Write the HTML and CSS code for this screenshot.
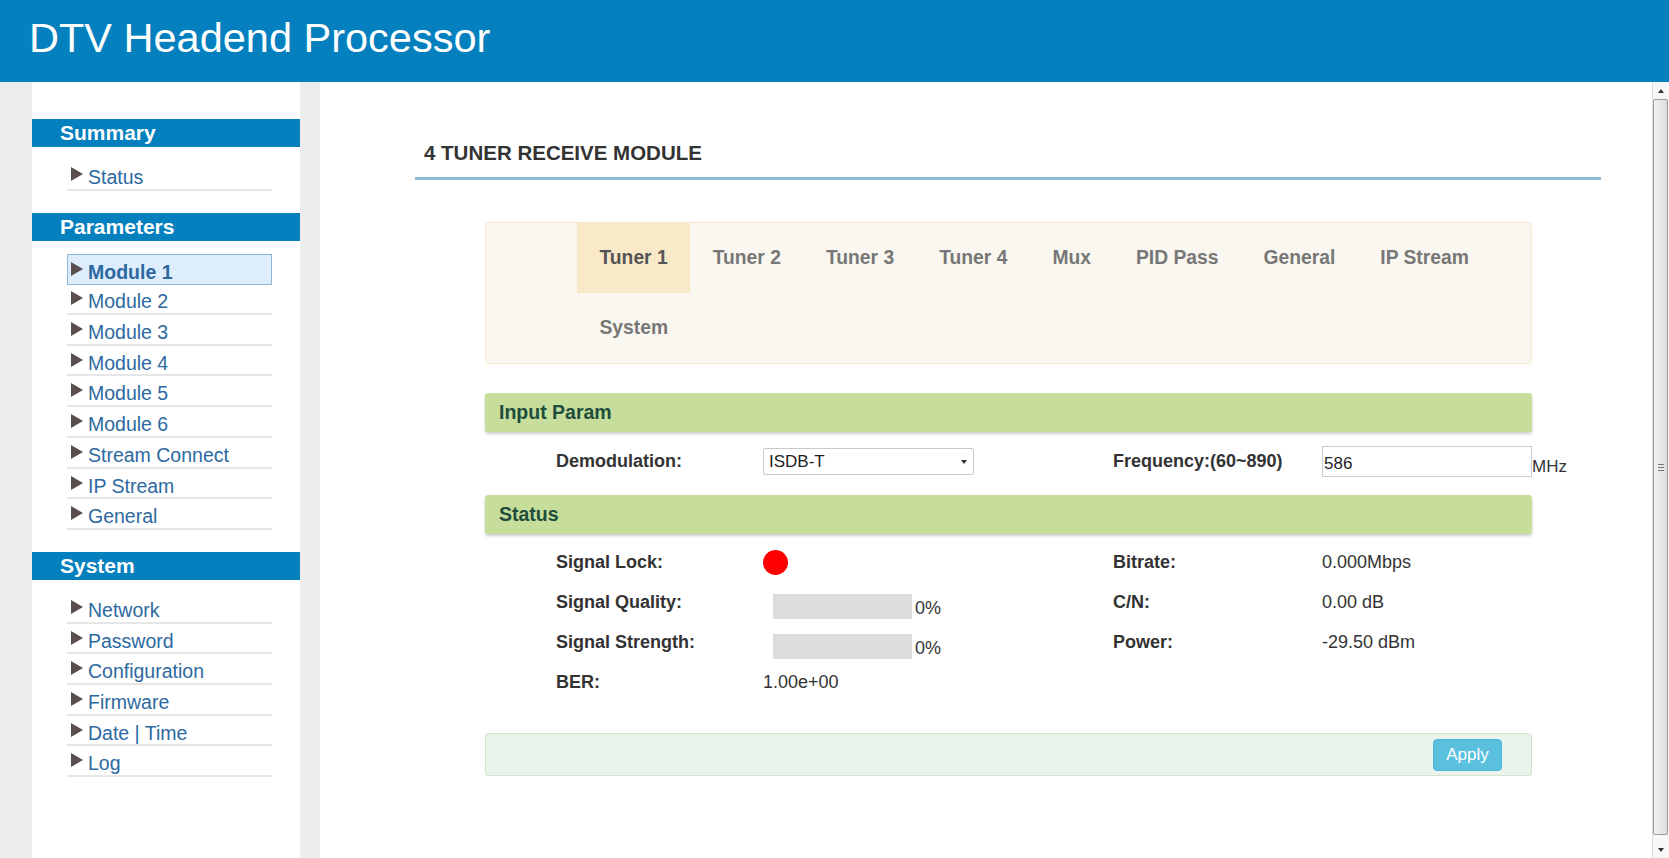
FILE: index.html
```html
<!DOCTYPE html>
<html lang="en">
<head>
    <meta charset="UTF-8">
    <title>DTV Headend Processor</title>
    <link rel="stylesheet" href="styles.css">
</head>
<body>
    <header class="topbar">
        <h1>DTV Headend Processor</h1>
    </header>

    <div class="frame">
        <div class="edge"></div>

        <nav class="sidebar">
            <h2 class="menu-title">Summary</h2>
            <ul class="menu">
                <li><a href="#"><i class="arrow"></i>Status</a></li>
            </ul>

            <h2 class="menu-title">Parameters</h2>
            <ul class="menu">
                <li class="active"><a href="#"><i class="arrow"></i>Module 1</a></li>
                <li><a href="#"><i class="arrow"></i>Module 2</a></li>
                <li><a href="#"><i class="arrow"></i>Module 3</a></li>
                <li><a href="#"><i class="arrow"></i>Module 4</a></li>
                <li><a href="#"><i class="arrow"></i>Module 5</a></li>
                <li><a href="#"><i class="arrow"></i>Module 6</a></li>
                <li><a href="#"><i class="arrow"></i>Stream Connect</a></li>
                <li><a href="#"><i class="arrow"></i>IP Stream</a></li>
                <li><a href="#"><i class="arrow"></i>General</a></li>
            </ul>

            <h2 class="menu-title">System</h2>
            <ul class="menu">
                <li><a href="#"><i class="arrow"></i>Network</a></li>
                <li><a href="#"><i class="arrow"></i>Password</a></li>
                <li><a href="#"><i class="arrow"></i>Configuration</a></li>
                <li><a href="#"><i class="arrow"></i>Firmware</a></li>
                <li><a href="#"><i class="arrow"></i>Date | Time</a></li>
                <li><a href="#"><i class="arrow"></i>Log</a></li>
            </ul>
        </nav>

        <div class="edge edge-thin"></div>

        <main class="content">
            <h3 class="page-title">4 TUNER RECEIVE MODULE</h3>

            <div class="panel">
                <ul class="tabs">
                    <li class="active">Tuner 1</li>
                    <li>Tuner 2</li>
                    <li>Tuner 3</li>
                    <li>Tuner 4</li>
                    <li>Mux</li>
                    <li>PID Pass</li>
                    <li>General</li>
                    <li>IP Stream</li>
                    <li>System</li>
                </ul>

                <div class="section-bar">Input Param</div>
                <div class="fields">
                    <label>Demodulation:</label>
                    <div class="select-wrap">
                        <select class="select">
                            <option>ISDB-T</option>
                        </select>
                    </div>
                    <label>Frequency:(60~890)</label>
                    <div class="input-cell"><input class="text-input" type="text" value="586">MHz</div>
                </div>

                <div class="section-bar">Status</div>
                <div class="fields status">
                    <label>Signal Lock:</label>
                    <div><span class="lock-dot"></span></div>
                    <label>Bitrate:</label>
                    <div>0.000Mbps</div>

                    <label>Signal Quality:</label>
                    <div class="meter-cell"><span class="meter"><span class="meter-fill" style="width: 0%"></span></span>0%</div>
                    <label>C/N:</label>
                    <div>0.00 dB</div>

                    <label>Signal Strength:</label>
                    <div class="meter-cell"><span class="meter"><span class="meter-fill" style="width: 0%"></span></span>0%</div>
                    <label>Power:</label>
                    <div>-29.50 dBm</div>

                    <label>BER:</label>
                    <div>1.00e+00</div>
                    <span></span>
                    <span></span>
                </div>

                <div class="actions">
                    <button class="btn-apply">Apply</button>
                </div>
            </div>
        </main>

        <div class="scrollbar">
            <div class="sb-btn"><i class="sb-up"></i></div>
            <div class="sb-thumb"><i class="sb-grip"></i></div>
            <div class="sb-btn"><i class="sb-down"></i></div>
        </div>
    </div>
</body>
</html>
```

FILE: styles.css
```css
body {
    margin: 0;
    font-family: "Liberation Sans", Arial, sans-serif;
    color: #333;
    overflow: hidden;
}

/* top banner */
.topbar {
    height: 82px;
    background-color: #0480be;
}
.topbar h1 {
    margin: 0;
    padding-left: 29px;
    font-size: 41.5px;
    font-weight: normal;
    line-height: 76px;
    color: #fff;
}

.frame {
    display: flex;
    height: calc(100vh - 82px);
}
.edge {
    flex: 0 0 32px;
    background-color: #ededed;
}
.edge-thin { flex-basis: 20px; }

/* left menu */
.sidebar {
    flex: 0 0 268px;
    padding-top: 37px;
    background-color: #fff;
}
.menu-title {
    margin: 0;
    height: 28px;
    padding-left: 28px;
    background-color: #0480be;
    color: #fff;
    font-size: 21px;
    line-height: 28px;
}
.menu {
    list-style: none;
    margin: 13px 28px 22px 35px;
    padding: 0;
}
.menu li {
    height: 28.7px;
    border-bottom: 2px solid #e6e6e6;
}
.menu a {
    display: block;
    padding: 7px 0 0 4px;
    font-size: 19.5px;
    line-height: 21px;
    color: #2d69a1;
    text-decoration: none;
}
.menu li.active {
    border: 1px solid #8db7d6;
    background-color: #deedfc;
    height: 29.7px;
    margin-bottom: -1px;
}
.menu li.active a {
    padding-left: 3px;
    font-weight: bold;
}
.arrow {
    display: inline-block;
    width: 0;
    height: 0;
    margin-right: 5px;
    border-left: 12px solid #5a4e4e;
    border-top: 7px solid transparent;
    border-bottom: 7px solid transparent;
    vertical-align: 3px;
}

/* page body */
.content {
    flex: 1;
    min-width: 0;
    padding: 0 51px 0 95px;
    background-color: #fff;
}
.page-title {
    margin: 59px 0 0;
    padding: 0 0 12px 9px;
    border-bottom: 3px solid #8cbbd8;
    font-size: 20.5px;
    line-height: 24px;
    color: #333;
}
.panel {
    margin: 42px 69px 0 70px;
    font-size: 18px;
}

.tabs {
    display: flex;
    flex-wrap: wrap;
    list-style: none;
    margin: 0;
    padding: 0 0 0 91px;
    background-color: #faf7f0;
    border: 1px solid #f6e8cc;
    border-radius: 4px;
}
.tabs li {
    padding: 0 22.5px;
    height: 70px;
    line-height: 70px;
    font-size: 19.3px;
    font-weight: bold;
    color: #777;
}
.tabs li.active {
    background-color: #f9e9c9;
    color: #555;
}

.section-bar {
    margin-top: 29px;
    height: 39px;
    padding-left: 14px;
    background-color: #c7dd9b;
    border-radius: 3px;
    box-shadow: 0 2px 3px rgba(0, 0, 0, 0.2);
    font-size: 19.5px;
    font-weight: bold;
    line-height: 39px;
    color: #1d4d3b;
}
.section-bar + .fields { margin-top: 14px; }
.fields + .section-bar { margin-top: 18px; }

.fields {
    display: grid;
    grid-template-columns: 207px 350px 209px 1fr;
    align-items: center;
    padding-left: 71px;
}
.fields label {
    font-weight: bold;
    color: #333;
    align-self: start;
    padding-top: 5px;
}
.fields.status { margin-top: 8px; }
.fields.status > * {
    height: 40px;
    display: flex;
    align-items: center;
}
.fields.status label {
    padding-top: 0;
}

.select-wrap {
    position: relative;
    width: 211px;
}
.select-wrap::after {
    content: "";
    position: absolute;
    right: 7px;
    top: 12px;
    border-top: 4px solid #333;
    border-left: 3.5px solid transparent;
    border-right: 3.5px solid transparent;
}
.select {
    width: 211px;
    height: 27px;
    padding: 0 0 0 5px;
    border: 1px solid #c9c9c9;
    border-radius: 2px;
    background: #fff;
    font-family: inherit;
    font-size: 17px;
    color: #222;
    appearance: none;
}
.input-cell {
    display: flex;
    align-items: flex-end;
    font-size: 17px;
    color: #333;
}
.text-input {
    width: 210px;
    height: 31px;
    box-sizing: border-box;
    padding: 4px 0 0 1px;
    border: 1px solid #c8ccd4;
    font-family: inherit;
    font-size: 17px;
    color: #222;
}

.lock-dot {
    display: inline-block;
    width: 25px;
    height: 25px;
    border-radius: 50%;
    background-color: #f00;
}
.fields.status .meter-cell {
    align-items: flex-end;
    padding-bottom: 3px;
    box-sizing: border-box;
}
.meter {
    display: inline-block;
    width: 139px;
    height: 25px;
    margin: 0 3px 0 10px;
    background-color: #dcdcdc;
}
.meter-fill {
    display: block;
    height: 100%;
    background-color: #5cb85c;
}

.actions {
    display: flex;
    justify-content: flex-end;
    margin-top: 31px;
    padding: 5px 29px 0 0;
    height: 36px;
    background-color: #ebf4ec;
    border: 1px solid #d4e4d1;
    border-radius: 3px;
}
.btn-apply {
    width: 69px;
    height: 32px;
    padding: 0;
    background-color: #5bc0de;
    border: 1px solid #46b8da;
    border-radius: 4px;
    color: #fff;
    font-family: inherit;
    font-size: 17px;
}

/* frame scrollbar */
.scrollbar {
    flex: 0 0 16px;
    display: flex;
    flex-direction: column;
    border-left: 1px solid #dedede;
    background-color: #f7f7f7;
}
.sb-btn {
    height: 17px;
    display: flex;
    align-items: center;
    justify-content: center;
}
.sb-up, .sb-down {
    width: 0;
    height: 0;
    border-left: 3.5px solid transparent;
    border-right: 3.5px solid transparent;
}
.sb-up { border-bottom: 4px solid #333; }
.sb-down { border-top: 4px solid #333; }
.sb-thumb {
    flex: 1;
    margin: 0 1px 6px 0;
    border: 1px solid #9b9b9b;
    border-radius: 2px;
    background: linear-gradient(to right, #f2f2f2, #dcdcdc);
    display: flex;
    align-items: center;
    justify-content: center;
}
.sb-grip {
    width: 6px;
    height: 5px;
    border-top: 1px solid #777;
    border-bottom: 1px solid #777;
    background: linear-gradient(#777, #777) center / 100% 1px no-repeat;
}
```
